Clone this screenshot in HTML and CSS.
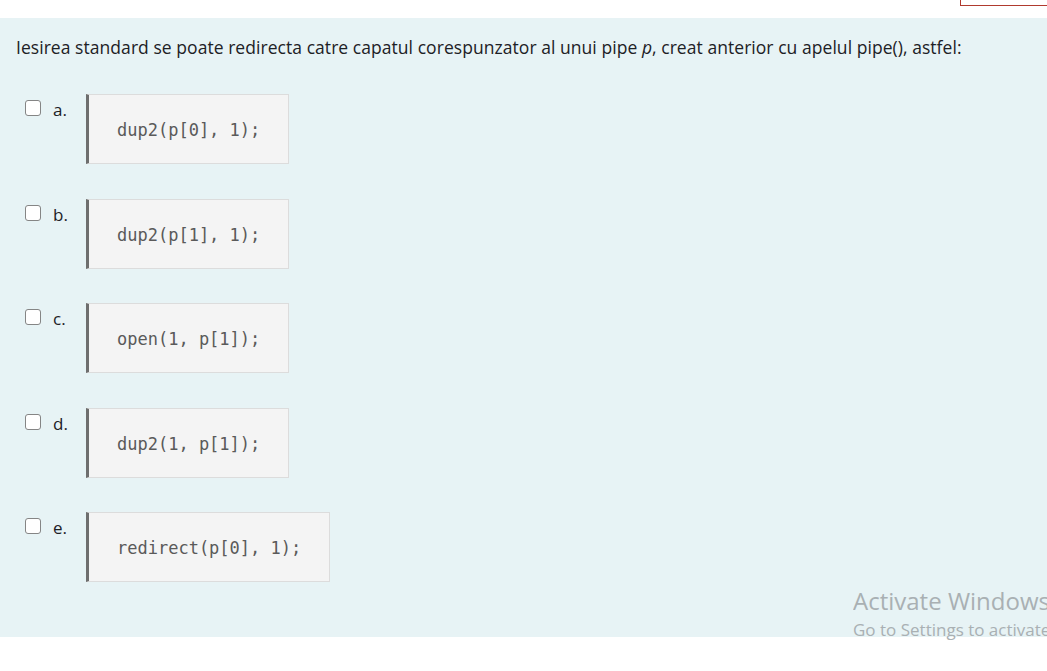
FILE: index.html
```html
<!DOCTYPE html>
<html>
<head>
<meta charset="utf-8">
<link rel="stylesheet" href="styles.css">
</head>
<body>
<div class="topbar"><div class="redbox"></div></div>
<div class="panel">
  <p class="question">Iesirea standard se poate redirecta catre capatul corespunzator al unui pipe <i>p</i>, creat anterior cu apelul pipe(), astfel:</p>
  <div class="answers">
    <div class="opt"><span class="cb"></span><span class="lbl">a.</span><pre class="code">dup2(p[0], 1);</pre></div>
    <div class="opt"><span class="cb"></span><span class="lbl">b.</span><pre class="code">dup2(p[1], 1);</pre></div>
    <div class="opt"><span class="cb"></span><span class="lbl">c.</span><pre class="code">open(1, p[1]);</pre></div>
    <div class="opt"><span class="cb"></span><span class="lbl">d.</span><pre class="code">dup2(1, p[1]);</pre></div>
    <div class="opt"><span class="cb"></span><span class="lbl">e.</span><pre class="code">redirect(p[0], 1);</pre></div>
  </div>
</div>
<div class="watermark">
  <div class="wm1">Activate Windows</div>
  <div class="wm2">Go to Settings to activate</div>
</div>
</body>
</html>
```
FILE: styles.css
```css
html, body {
  margin: 0;
  padding: 0;
  background: #ffffff;
  overflow: hidden;
  width: 1047px;
  height: 671px;
}
body {
  font-family: "Open Sans", "Noto Sans", sans-serif;
  color: #1d2125;
  position: relative;
}
.topbar {
  height: 18px;
  position: relative;
}
.redbox {
  position: absolute;
  left: 960px;
  top: -2px;
  width: 100px;
  height: 6px;
  border: 1px solid #b03a2e;
}
.panel {
  background: #e7f3f5;
  height: 619px;
  padding: 0 16px;
  box-sizing: border-box;
  overflow: hidden;
}
.question {
  margin: 0;
  padding-top: 17px;
  font-size: 17.5px;
  line-height: 24px;
  letter-spacing: 0.05px;
  white-space: nowrap;
}
.answers {
  display: flex;
  flex-direction: column;
  gap: 34.5px;
  margin-top: 35px;
}
.opt {
  display: flex;
  align-items: flex-start;
  height: 70px;
}
.cb {
  width: 14px;
  height: 14px;
  border: 1px solid #858585;
  border-radius: 3px;
  background: #fff;
  margin: 6px 0 0 9px;
  flex: none;
}
.lbl {
  font-size: 17px;
  line-height: 20px;
  margin: 6px 0 0 12px;
  width: 33px;
  flex: none;
}
.code {
  margin: 0;
  box-sizing: border-box;
  height: 70px;
  background: #f4f4f4;
  border: 1px solid #dcdcdc;
  border-left: 3px solid #6e6e6e;
  padding: 24px 28px 0 28px;
  font-family: "DejaVu Sans Mono", "Liberation Mono", monospace;
  font-size: 17px;
  line-height: 22px;
  color: #5a5a5a;
}
.watermark {
  position: absolute;
  left: 853px;
  top: 585px;
  width: 194px;
  overflow: hidden;
  color: #a9b0b3;
  white-space: nowrap;
  font-family: "Open Sans", sans-serif;
}
.wm1 {
  font-size: 24px;
  line-height: 32px;
}
.wm2 {
  font-size: 17px;
  line-height: 26px;
}
```
